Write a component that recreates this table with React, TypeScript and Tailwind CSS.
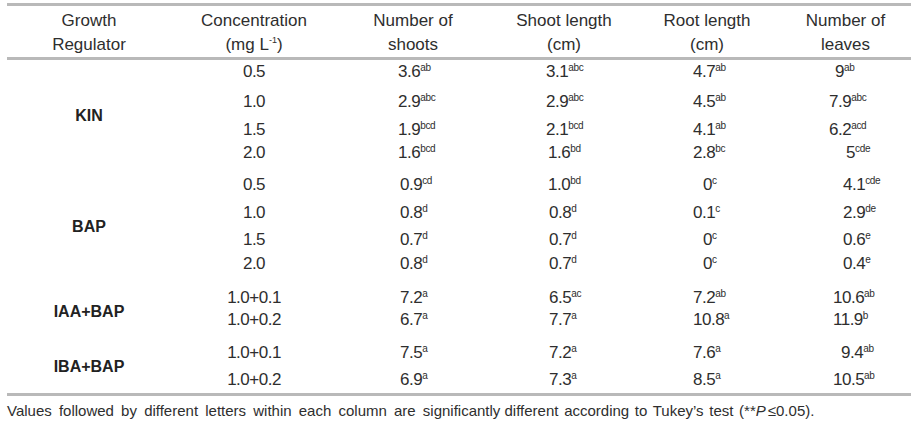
import React from "react";

type Cell = [string, string, string];
type Row = { conc: string; mt: string; vals: Cell[] };
type Group = { label: string; mt: string; pt: string; rows: Row[] };

const groups: Group[] = [
  {
    label: "KIN",
    mt: "mt-[2px]",
    pt: "pt-[6px]",
    rows: [
      { conc: "0.5", mt: "mt-0", vals: [["3.6", "ab", "pl-[61px]"], ["3.1", "abc", "pl-[57px]"], ["4.7", "ab", "pl-[54px]"], ["9", "ab", "pl-[60px]"]] },
      { conc: "1.0", mt: "mt-[10px]", vals: [["2.9", "abc", "pl-[61px]"], ["2.9", "abc", "pl-[57px]"], ["4.5", "ab", "pl-[54px]"], ["7.9", "abc", "pl-[54px]"]] },
      { conc: "1.5", mt: "mt-[8px]", vals: [["1.9", "bcd", "pl-[61px]"], ["2.1", "bcd", "pl-[57px]"], ["4.1", "ab", "pl-[54px]"], ["6.2", "acd", "pl-[54px]"]] },
      { conc: "2.0", mt: "mt-[3px]", vals: [["1.6", "bcd", "pl-[61px]"], ["1.6", "bd", "pl-[59px]"], ["2.8", "bc", "pl-[54px]"], ["5", "cde", "pl-[71px]"]] },
    ],
  },
  {
    label: "BAP",
    mt: "mt-[12px]",
    pt: "pt-[5px]",
    rows: [
      { conc: "0.5", mt: "mt-0", vals: [["0.9", "cd", "pl-[63px]"], ["1.0", "bd", "pl-[59px]"], ["0", "c", "pl-[64px]"], ["4.1", "cde", "pl-[68px]"]] },
      { conc: "1.0", mt: "mt-[8px]", vals: [["0.8", "d", "pl-[63px]"], ["0.8", "d", "pl-[60px]"], ["0.1", "c", "pl-[54px]"], ["2.9", "de", "pl-[68px]"]] },
      { conc: "1.5", mt: "mt-[7px]", vals: [["0.7", "d", "pl-[63px]"], ["0.7", "d", "pl-[60px]"], ["0", "c", "pl-[64px]"], ["0.6", "e", "pl-[68px]"]] },
      { conc: "2.0", mt: "mt-[4px]", vals: [["0.8", "d", "pl-[63px]"], ["0.7", "d", "pl-[60px]"], ["0", "c", "pl-[64px]"], ["0.4", "e", "pl-[68px]"]] },
    ],
  },
  {
    label: "IAA+BAP",
    mt: "mt-[14px]",
    pt: "pt-[6px]",
    rows: [
      { conc: "1.0+0.1", mt: "mt-0", vals: [["7.2", "a", "pl-[63px]"], ["6.5", "ac", "pl-[60px]"], ["7.2", "ab", "pl-[54px]"], ["10.6", "ab", "pl-[58px]"]] },
      { conc: "1.0+0.2", mt: "mt-[2px]", vals: [["6.7", "a", "pl-[63px]"], ["7.7", "a", "pl-[60px]"], ["10.8", "a", "pl-[54px]"], ["11.9", "b", "pl-[58px]"]] },
    ],
  },
  {
    label: "IBA+BAP",
    mt: "mt-[13px]",
    pt: "pt-0",
    rows: [
      { conc: "1.0+0.1", mt: "mt-0", vals: [["7.5", "a", "pl-[63px]"], ["7.2", "a", "pl-[60px]"], ["7.6", "a", "pl-[54px]"], ["9.4", "ab", "pl-[66px]"]] },
      { conc: "1.0+0.2", mt: "mt-[7px]", vals: [["6.9", "a", "pl-[63px]"], ["7.3", "a", "pl-[60px]"], ["8.5", "a", "pl-[54px]"], ["10.5", "ab", "pl-[58px]"]] },
    ],
  },
];

const valWidths = ["w-[152px]", "w-[150px]", "w-[136px]", "w-[136px]"];

function Sup({ children }: { children: React.ReactNode }) {
  return <sup className="text-[10px] -top-[6px] tracking-[-0.3px]">{children}</sup>;
}

export default function App() {
  return (
    <div
      className="w-[916px] h-[430px] bg-white text-[#2e2e2e] overflow-hidden"
      style={{ fontFamily: '"Liberation Sans", Arial, sans-serif' }}
    >
      <div className="ml-[7px] w-[904px] pt-[3px] flex flex-col">
        <div className="h-[3px] bg-[#b9b9b9]" />
        <div className="flex pt-[3px] text-[17px] leading-[24px] text-center">
          <div className="w-[164px]">Growth<br />Regulator</div>
          <div className="w-[166px]">
            Concentration<br />(mg L<sup className="text-[9px] -top-[7px]">-1</sup>)
          </div>
          <div className="w-[152px]">Number of<br />shoots</div>
          <div className="w-[150px]">Shoot length<br />(cm)</div>
          <div className="w-[136px]">Root length<br />(cm)</div>
          <div className="w-[136px] pl-[5px]">Number of<br />leaves</div>
        </div>
        <div className="h-[3px] bg-[#b9b9b9]" />
        <div className="flex flex-col text-[17px] leading-[20px]">
          {groups.map((g) => (
            <div key={g.label} className={`flex ${g.mt}`}>
              <div className={`w-[164px] flex items-center justify-center font-bold text-[16px] text-[#222] ${g.pt}`}>
                {g.label}
              </div>
              <div className="flex flex-col tracking-[-0.5px]">
                {g.rows.map((r, i) => (
                  <div key={i} className={`flex h-[20px] ${r.mt}`}>
                    <div className="w-[166px] text-center">{r.conc}</div>
                    {r.vals.map((v, j) => (
                      <div key={j} className={`${valWidths[j]} ${v[2]} whitespace-nowrap`}>
                        {v[0]}
                        <Sup>{v[1]}</Sup>
                      </div>
                    ))}
                  </div>
                ))}
              </div>
            </div>
          ))}
        </div>
        <div className="mt-[3px] h-[3px] bg-[#b9b9b9]" />
      </div>
      <div className="ml-[7px] mt-[5px] text-[15px] leading-[20px] whitespace-nowrap">
        <span className="[word-spacing:3px]">
          Values followed by different letters within each column are significantly
        </span>{" "}
        <span className="[word-spacing:1.5px]">
          different according to Tukey’s test (**<i>P</i>
          <span className="ml-[2px]">≤</span>0.05).
        </span>
      </div>
    </div>
  );
}
